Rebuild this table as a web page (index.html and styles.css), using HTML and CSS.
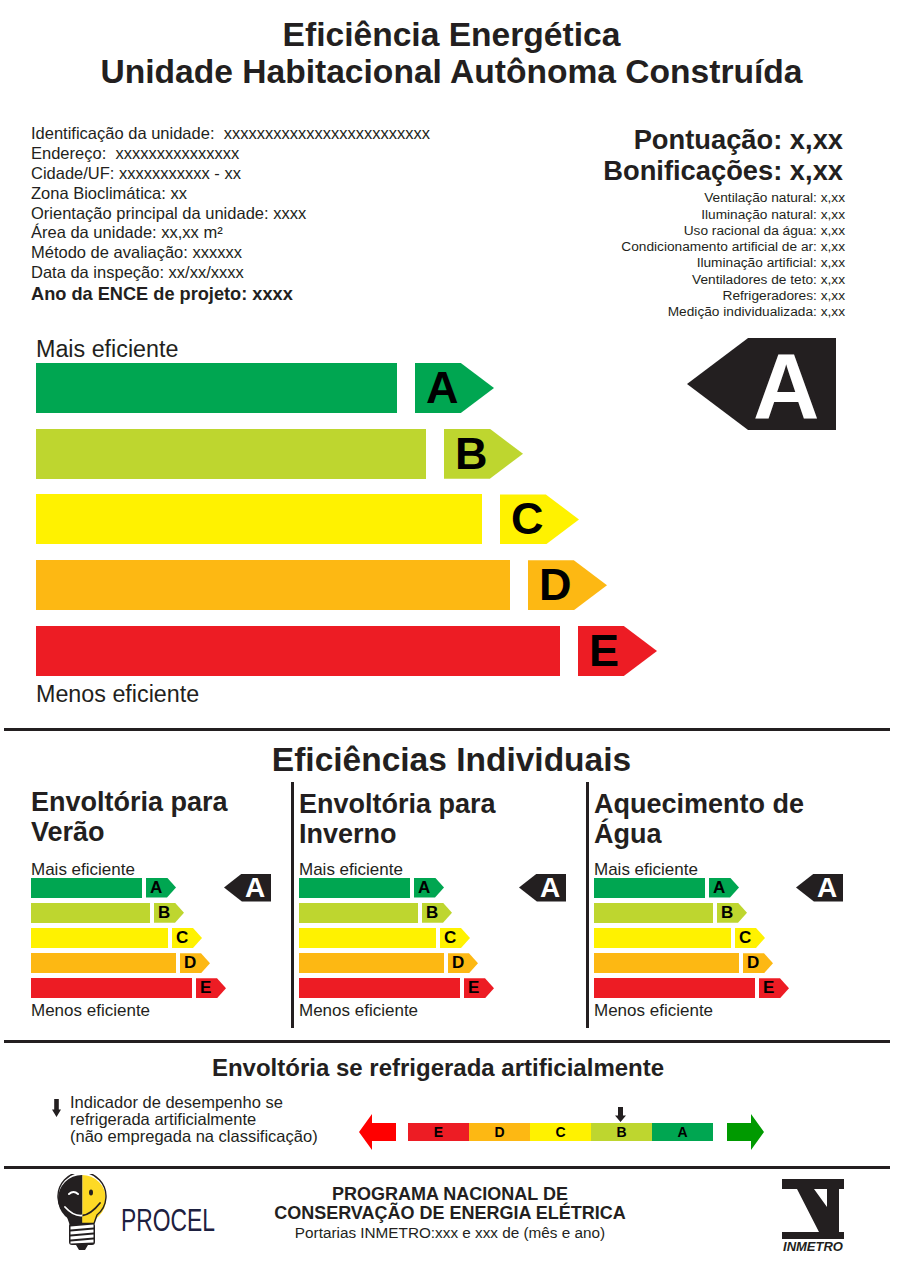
FILE: index.html
```html
<!DOCTYPE html>
<html lang="pt-BR">
<head>
<meta charset="utf-8">
<title>ENCE - Eficiência Energética</title>
<link rel="stylesheet" href="styles.css">
</head>
<body>
<div class="page">
  <h1 class="title">Eficiência Energética<br>Unidade Habitacional Autônoma Construída</h1>

  <section class="info">
    <div class="info-left">
      <p>Identificação da unidade:&nbsp; xxxxxxxxxxxxxxxxxxxxxxxxx</p>
      <p>Endereço:&nbsp; xxxxxxxxxxxxxxx</p>
      <p>Cidade/UF: xxxxxxxxxxx - xx</p>
      <p>Zona Bioclimática: xx</p>
      <p>Orientação principal da unidade: xxxx</p>
      <p>Área da unidade: xx,xx m²</p>
      <p>Método de avaliação: xxxxxx</p>
      <p>Data da inspeção: xx/xx/xxxx</p>
      <p class="strong">Ano da ENCE de projeto: xxxx</p>
    </div>
    <div class="info-right">
      <p class="score">Pontuação: x,xx</p>
      <p class="score">Bonificações: x,xx</p>
      <ul class="bonus">
        <li>Ventilação natural: x,xx</li>
        <li>Iluminação natural: x,xx</li>
        <li>Uso racional da água: x,xx</li>
        <li>Condicionamento artificial de ar: x,xx</li>
        <li>Iluminação artificial: x,xx</li>
        <li>Ventiladores de teto: x,xx</li>
        <li>Refrigeradores: x,xx</li>
        <li>Medição individualizada: x,xx</li>
      </ul>
    </div>
  </section>

  <section class="main">
    <div class="scale-big">
      <div class="lbl-big">Mais eficiente</div>
      <div class="rows-big">
        <div class="row-big"><div class="bar c-a" style="width:361px"></div><div class="arr-big c-a">A</div></div>
        <div class="row-big"><div class="bar c-b" style="width:390px"></div><div class="arr-big c-b">B</div></div>
        <div class="row-big"><div class="bar c-c" style="width:446px"></div><div class="arr-big c-c">C</div></div>
        <div class="row-big"><div class="bar c-d" style="width:474px"></div><div class="arr-big c-d">D</div></div>
        <div class="row-big"><div class="bar c-e" style="width:524px"></div><div class="arr-big c-e">E</div></div>
      </div>
      <div class="lbl-big lbl-bottom">Menos eficiente</div>
    </div>
    <div class="ind-big">A</div>
  </section>

  <hr class="rule rule-1">

  <section class="individual">
    <h2 class="ind-title">Eficiências Individuais</h2>
    <div class="cols">
      <div class="col col-first">
        <h3 class="col-title">Envoltória para<br>Verão</h3>
        <div class="lbl-sm">Mais eficiente</div>
        <div class="rows-sm">
          <div class="row-sm"><div class="bar c-a" style="width:111px"></div><div class="arr-sm c-a">A</div><div class="ind-sm">A</div></div>
          <div class="row-sm"><div class="bar c-b" style="width:119px"></div><div class="arr-sm c-b">B</div></div>
          <div class="row-sm"><div class="bar c-c" style="width:137px"></div><div class="arr-sm c-c">C</div></div>
          <div class="row-sm"><div class="bar c-d" style="width:145px"></div><div class="arr-sm c-d">D</div></div>
          <div class="row-sm"><div class="bar c-e" style="width:161px"></div><div class="arr-sm c-e">E</div></div>
        </div>
        <div class="lbl-sm lbl-sm-bottom">Menos eficiente</div>
      </div>
      <div class="vdiv"></div>
      <div class="col col-mid">
        <h3 class="col-title">Envoltória para<br>Inverno</h3>
        <div class="lbl-sm">Mais eficiente</div>
        <div class="rows-sm">
          <div class="row-sm"><div class="bar c-a" style="width:111px"></div><div class="arr-sm c-a">A</div><div class="ind-sm">A</div></div>
          <div class="row-sm"><div class="bar c-b" style="width:119px"></div><div class="arr-sm c-b">B</div></div>
          <div class="row-sm"><div class="bar c-c" style="width:137px"></div><div class="arr-sm c-c">C</div></div>
          <div class="row-sm"><div class="bar c-d" style="width:145px"></div><div class="arr-sm c-d">D</div></div>
          <div class="row-sm"><div class="bar c-e" style="width:161px"></div><div class="arr-sm c-e">E</div></div>
        </div>
        <div class="lbl-sm lbl-sm-bottom">Menos eficiente</div>
      </div>
      <div class="vdiv"></div>
      <div class="col col-last">
        <h3 class="col-title">Aquecimento de<br>Água</h3>
        <div class="lbl-sm">Mais eficiente</div>
        <div class="rows-sm">
          <div class="row-sm"><div class="bar c-a" style="width:111px"></div><div class="arr-sm c-a">A</div><div class="ind-sm">A</div></div>
          <div class="row-sm"><div class="bar c-b" style="width:119px"></div><div class="arr-sm c-b">B</div></div>
          <div class="row-sm"><div class="bar c-c" style="width:137px"></div><div class="arr-sm c-c">C</div></div>
          <div class="row-sm"><div class="bar c-d" style="width:145px"></div><div class="arr-sm c-d">D</div></div>
          <div class="row-sm"><div class="bar c-e" style="width:161px"></div><div class="arr-sm c-e">E</div></div>
        </div>
        <div class="lbl-sm lbl-sm-bottom">Menos eficiente</div>
      </div>
    </div>
  </section>

  <hr class="rule rule-2">

  <section class="refrig">
    <h4 class="refrig-title">Envoltória se refrigerada artificialmente</h4>
    <div class="refrig-body">
      <div class="legend">
        <svg class="legend-ico" width="9" height="18" viewBox="0 0 9 18"><path d="M2.2 0H6.8V10.5H9L4.5 18L0 10.5H2.2Z" fill="#231f20"/></svg>
        <p class="legend-text">Indicador de desempenho se<br>refrigerada artificialmente<br>(não empregada na classificação)</p>
      </div>
      <div class="rscale">
        <svg class="marker" width="11" height="15" viewBox="0 0 11 15"><path d="M3 0H8V8.5H11L5.5 15L0 8.5H3Z" fill="#231f20"/></svg>
        <div class="rrow">
          <svg class="rarrow" width="37" height="36" viewBox="0 0 37 36"><path d="M0 18L13 0V9H37V27H13V36Z" fill="#ff0000"/></svg>
          <div class="segs">
            <span class="seg c-e">E</span><span class="seg c-d">D</span><span class="seg c-c">C</span><span class="seg c-b">B</span><span class="seg c-a">A</span>
          </div>
          <svg class="garrow" width="37" height="36" viewBox="0 0 37 36"><path d="M37 18L24 0V9H0V27H24V36Z" fill="#009a00"/></svg>
        </div>
      </div>
    </div>
  </section>

  <hr class="rule rule-3">

  <footer class="footer">
    <div class="procel">
      <svg class="bulb" width="56" height="78" viewBox="0 0 56 78">
        <defs>
          <clipPath id="leftHalf"><rect x="0" y="0" width="28.5" height="78"/></clipPath>
          <clipPath id="rightHalf"><rect x="28.5" y="0" width="28" height="78"/></clipPath>
        </defs>
        <g clip-path="url(#leftHalf)">
          <circle cx="28" cy="25" r="24" fill="#231f20"/>
          <path d="M13 40H43L40 50H16Z" fill="#231f20"/>
        </g>
        <g clip-path="url(#rightHalf)">
          <circle cx="28" cy="25" r="24" fill="#fdd925"/>
          <path d="M13 40H43L40 50H16Z" fill="#fdd925"/>
        </g>
        <path d="M16 49.5L13 41A24 24 0 1 1 43 41L40 49.5Z" fill="none" stroke="#231f20" stroke-width="1.4"/>
        <path d="M15 20Q19.5 16 24 20" fill="none" stroke="#fff" stroke-width="2" stroke-linecap="round"/>
        <ellipse cx="37" cy="18.5" rx="2" ry="3" fill="#231f20"/>
        <g clip-path="url(#leftHalf)"><path d="M11 33Q28 52 46 29" fill="none" stroke="#fff" stroke-width="1.8" stroke-linecap="round"/></g>
        <g clip-path="url(#rightHalf)"><path d="M11 33Q28 52 46 29" fill="none" stroke="#231f20" stroke-width="1.8" stroke-linecap="round"/></g>
        <rect x="15" y="49" width="26" height="22" rx="3" fill="#231f20"/>
        <path d="M16.5 52.5L39.5 50.5V53.5L16.5 55.5Z" fill="#fff"/>
        <path d="M16.5 57.5L39.5 55.5V58.5L16.5 60.5Z" fill="#fff"/>
        <path d="M16.5 62.5L39.5 60.5V63.5L16.5 65.5Z" fill="#fff"/>
        <path d="M16.5 67.5L39.5 65.5V68.5L16.5 69.5Z" fill="#fff"/>
        <path d="M22 71H34L31 76H25Z" fill="#231f20"/>
      </svg>
      <span class="procel-word">PROCEL</span>
    </div>
    <div class="program">
      <p class="program-name">PROGRAMA NACIONAL DE<br>CONSERVAÇÃO DE ENERGIA ELÉTRICA</p>
      <p class="program-note">Portarias INMETRO:xxx e xxx de (mês e ano)</p>
    </div>
    <div class="inmetro">
      <svg class="inmetro-mark" width="62" height="60" viewBox="0 0 62 60"><path fill-rule="evenodd" d="M0 0H62V10H57V53H62V60H0V53H37L15 10H0Z M32 10H45V28Z" fill="#231f20"/></svg>
      <span class="inmetro-word">INMETRO</span>
    </div>
  </footer>
</div>
</body>
</html>
```

FILE: styles.css
```css
* { box-sizing: border-box; }

html, body {
  margin: 0;
  padding: 0;
  background: #ffffff;
}

body {
  font-family: "Liberation Sans", Arial, Helvetica, sans-serif;
  color: #231f20;
}

p, ul, h1, h2, h3, h4 { margin: 0; padding: 0; }
ul { list-style: none; }

.page {
  width: 886px;
  margin-left: 4px;
  padding: 16px 45px 0 27px;
}

/* ---------- Title ---------- */
.title {
  font-size: 33.6px;
  line-height: 37px;
  font-weight: bold;
  text-align: center;
  padding-left: 27px;
}

/* ---------- Info ---------- */
.info {
  display: flex;
  justify-content: space-between;
  align-items: flex-start;
  margin-top: 34.4px;
}

.info-left p {
  font-size: 16.5px;
  line-height: 19.8px;
  white-space: nowrap;
}

.info-left .strong {
  font-weight: bold;
  font-size: 18.2px;
  line-height: 21px;
  margin-top: 1.5px;
}

.info-right {
  text-align: right;
}

.score {
  font-size: 27.3px;
  line-height: 31px;
  font-weight: bold;
  margin-right: 2px;
}

.bonus {
  margin-top: 4px;
}

.bonus li {
  font-size: 13.7px;
  line-height: 16.25px;
  white-space: nowrap;
}

/* ---------- Colours ---------- */
.c-a { background: #00a651; }
.c-b { background: #bed62f; }
.c-c { background: #fff200; }
.c-d { background: #fdb813; }
.c-e { background: #ed1c24; }

.bar { flex: none; }

/* ---------- Main scale ---------- */
.main {
  display: flex;
  align-items: flex-start;
  margin-top: 15.6px;
}

.scale-big {
  margin-left: 5px;
}

.lbl-big {
  font-size: 23.3px;
  line-height: 26px;
  white-space: nowrap;
}

.lbl-bottom {
  margin-top: 5.5px;
}

.rows-big {
  display: flex;
  flex-direction: column;
  gap: 15.75px;
  margin-top: 1px;
}

.row-big {
  display: flex;
  gap: 18px;
  height: 50px;
}

.row-big .bar { height: 50px; }

.arr-big {
  width: 79px;
  height: 50px;
  flex: none;
  clip-path: polygon(0 0, 58% 0, 100% 50%, 58% 100%, 0 100%);
  font-size: 45px;
  line-height: 50px;
  font-weight: bold;
  color: #000;
  padding-left: 11px;
}

.ind-big {
  margin-left: auto;
  margin-right: 9px;
  margin-top: 2px;
  width: 149px;
  height: 92px;
  background: #231f20;
  clip-path: polygon(0 50%, 41% 0, 100% 0, 100% 100%, 41% 100%);
  color: #fff;
  font-size: 92px;
  line-height: 96px;
  font-weight: bold;
  padding-left: 66px;
}

/* ---------- Rules ---------- */
.rule {
  border: 0;
  height: 3px;
  background: #231f20;
  margin: 0 -45px 0 -27px;
}

.rule-1 { margin-top: 20.5px; }
.rule-2 { margin-top: 12.3px; }
.rule-3 { margin-top: 16px; }

/* ---------- Individual ---------- */
.ind-title {
  font-size: 33.5px;
  line-height: 37px;
  font-weight: bold;
  text-align: center;
  margin-top: 10px;
  padding-left: 27px;
}

.cols {
  display: grid;
  grid-template-columns: 260px 3px 292px 3px 274px;
  margin-top: 4px;
}

.vdiv {
  background: #231f20;
}

.col {
  padding: 5px 20px 8.3px 0;
}

.col-mid, .col-last {
  padding-left: 5px;
}

.col-title {
  font-size: 27px;
  line-height: 30px;
  font-weight: bold;
  white-space: nowrap;
}

.col-mid .col-title, .col-last .col-title {
  margin-top: 2px;
  margin-bottom: -2px;
}

.lbl-sm {
  font-size: 17px;
  line-height: 17px;
  margin-top: 13.6px;
  white-space: nowrap;
}

.lbl-sm-bottom {
  margin-top: 4px;
}

.rows-sm {
  display: flex;
  flex-direction: column;
  gap: 5.2px;
}

.row-sm {
  display: flex;
  align-items: center;
  gap: 4px;
  height: 20px;
}

.row-sm .bar { height: 20px; }

.arr-sm {
  width: 30px;
  height: 20px;
  flex: none;
  clip-path: polygon(0 0, 70% 0, 100% 50%, 70% 100%, 0 100%);
  font-size: 17px;
  line-height: 20px;
  font-weight: bold;
  color: #000;
  padding-left: 4px;
}

.ind-sm {
  margin-left: auto;
  width: 47px;
  height: 28px;
  margin-top: -4px;
  margin-bottom: -4px;
  flex: none;
  background: #231f20;
  clip-path: polygon(0 50%, 38% 0, 100% 0, 100% 100%, 38% 100%);
  color: #fff;
  font-size: 28px;
  line-height: 28px;
  font-weight: bold;
  padding-left: 21px;
}

/* ---------- Refrigerated ---------- */
.refrig-title {
  font-size: 24px;
  line-height: 25px;
  font-weight: bold;
  text-align: center;
  margin-top: 12px;
}

.refrig-body {
  display: flex;
  align-items: flex-start;
  margin-top: 13.6px;
}

.legend {
  width: 328px;
  flex: none;
  display: flex;
  align-items: flex-start;
  padding-left: 21px;
}

.legend-ico {
  flex: none;
  margin-top: 5.4px;
}

.legend-text {
  margin-left: 9px;
  font-size: 16.5px;
  line-height: 17px;
  white-space: nowrap;
}

.rscale {
  margin-top: 13.4px;
  display: flex;
  flex-direction: column;
}

.marker {
  display: block;
  margin-left: 256px;
  margin-bottom: -8px;
  position: relative;
  z-index: 1;
}

.rrow {
  display: flex;
  align-items: center;
}

.rarrow, .garrow { display: block; flex: none; }

.segs {
  display: flex;
  margin: 0 14px 0 12px;
}

.seg {
  width: 61px;
  height: 18px;
  font-size: 14px;
  line-height: 18px;
  font-weight: bold;
  text-align: center;
  color: #000;
}

/* ---------- Footer ---------- */
.footer {
  display: flex;
  align-items: flex-start;
  height: 112px;
}

.procel {
  width: 219px;
  flex: none;
  display: flex;
  align-items: flex-start;
  padding-left: 23px;
  padding-top: 5px;
}

.bulb {
  display: block;
  flex: none;
}

.procel-word {
  display: inline-block;
  margin-left: 11px;
  margin-top: 28px;
  width: 94px;
  font-size: 32px;
  line-height: 36px;
  color: #1d2040;
  transform: scaleX(0.714);
  transform-origin: left top;
  white-space: nowrap;
}

.program {
  width: 400px;
  flex: none;
  text-align: center;
  padding-top: 16px;
}

.program-name {
  font-size: 18px;
  line-height: 19px;
  font-weight: bold;
}

.program-note {
  font-size: 15.3px;
  line-height: 20px;
  margin-top: 0;
}

.inmetro {
  margin-left: 132px;
  padding-top: 10px;
  display: flex;
  flex-direction: column;
  align-items: center;
  width: 62px;
}

.inmetro-mark { display: block; }

.inmetro-word {
  font-size: 13px;
  line-height: 14px;
  font-weight: bold;
  font-style: italic;
  margin-top: 1px;
}
```
